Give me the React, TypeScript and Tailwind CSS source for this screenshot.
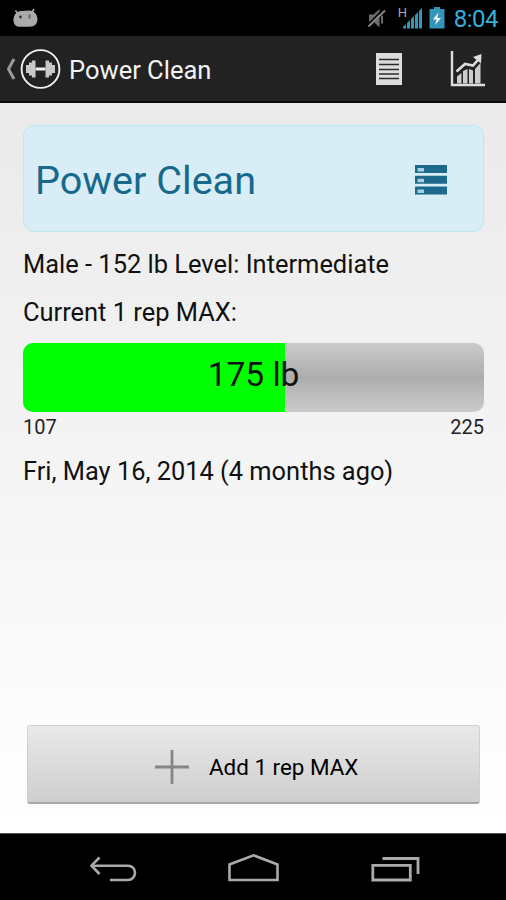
import type { ReactNode } from "react";

interface IconProps {
  width: number;
  height: number;
  className?: string;
  children: ReactNode;
}

const Icon = ({ width, height, className, children }: IconProps) => (
  <svg
    width={width}
    height={height}
    viewBox={`0 0 ${width} ${height}`}
    fill="none"
    className={`shrink-0 overflow-visible ${className ?? ""}`}
  >
    {children}
  </svg>
);

const StatusBar = () => {
  return (
    <header className="flex h-9 items-start bg-black pt-1.5">
      <Icon width={26} height={22} className="ml-3">
        <path d="M3.500 4.500 6 8M22 3l-2.500 4" stroke="#aaa" strokeWidth="1.600" />
        <path
          d="M1.500 15C1 10 4 5.500 9 5l8-.6c5-.2 8 3.600 8.400 8.100.3 4-1.600 7.500-5.400 7.900-4 .4-9 .6-13 .3-3.500-.3-5.200-2.300-5.500-5.700z"
          fill="#aaa"
        />
        <circle cx="8.500" cy="11" r="1.400" fill="#333" />
        <path d="M17.500 8.500v4" stroke="#555" strokeWidth="1.600" />
      </Icon>
      <div className="flex-1" />
      <Icon width={20} height={24}>
        <path d="M1 8.500h4.500l6-5.500v18.500l-6-6H1z" fill="#6c6c6c" />
        <path d="M14 9.500v8" stroke="#6c6c6c" strokeWidth="2" />
        <path d="M0 18.500 15.500 3" stroke="#000" strokeWidth="1.600" />
        <path d="M.5 20.500 17 4.500" stroke="#858585" strokeWidth="1.900" />
      </Icon>
      <div className="ml-[10px] flex h-6">
        <span className="w-[5px] font-[Roboto,sans-serif] text-[13px] leading-[14px] text-[#aaa]">
          H
        </span>
        <Icon width={20} height={24}>
          <path
            d="M0 22.500v-1.500l3-3v4.500zM4 22.500v-5.500l3-3v8.500zM8 22.500V13l3-3v12.500zM12 22.500V9l3-3v16.500zM16 22.500V5l3-3v20.500z"
            fill="#3299bb"
          />
        </Icon>
      </div>
      <Icon width={16} height={24} className="ml-[6px]">
        <path d="M5 1h6v2h4.500v19.500H.5V3H5z" fill="#3396b9" />
        <path d="M9.500 6.500 4 13.500h3.700L6 19l6-7H8.300z" fill="#fff" />
      </Icon>
      <span className="mr-2 ml-[9px] font-[Roboto,sans-serif] text-[24px] leading-[26px] tracking-[-0.500px] text-[#33b0dc]">
        8:04
      </span>
    </header>
  );
};

const ActionBar = () => {
  return (
    <div className="flex h-[67px] items-center border-b-2 border-[#080808] bg-[#222]">
      <Icon width={9} height={24} className="mt-px ml-1.5">
        <path d="M8 2 2.500 12 8 22" stroke="#999" strokeWidth="3" />
      </Icon>
      <Icon width={42} height={42} className="mt-px ml-[5px]">
        <circle cx="20.500" cy="21" r="18.900" stroke="#f2f2f2" strokeWidth="1.900" />
        <path
          d="M6 17h3v8H6zM9 14.500h3v13H9zM12 12.500h3.500v17H12zM25.500 12.500H29v17h-3.500zM29 14.500h3v13h-3zM32 17h3v8h-3z"
          fill="#c8c8c8"
        />
        <path d="M15.500 21h10" stroke="#eee" strokeWidth="3" />
      </Icon>
      <h1 className="mt-[3px] ml-[7px] font-[Roboto,sans-serif] text-[25.500px] leading-8 text-[#f3f3f3]">
        Power Clean
      </h1>
      <div className="flex-1" />
      <Icon width={26} height={32}>
        <path d="M0 0h26v32H0z" fill="#ddd" />
        <path
          d="M3 6.500h20M3 11.500h20M3 16.500h20M3 21h20M3 25.500h20"
          stroke="#2a2a2a"
          strokeWidth="1.700"
        />
      </Icon>
      <Icon width={36} height={38} className="mt-[3px] mr-[20px] ml-[48px]">
        <path d="M2 0v34h33" stroke="#ddd" strokeWidth="2.400" />
        <path
          d="M7 25.500l4.500-3.500v10.500H7zM13 20l4.500-2v14.500H13zM19 18l4 1.500v13h-4zM25 18l5.500-6v20.500H25z"
          fill="#ccc"
        />
        <path d="M6.500 20.500l8.500-7.500 8 1.500 7-8" stroke="#ddd" strokeWidth="2.600" />
        <path d="M23 6 31.500 3l-.5 9.500z" fill="#ddd" />
      </Icon>
    </div>
  );
};

interface RepMaxBarProps {
  value: string;
  min: number;
  max: number;
}

const RepMaxBar = ({ value, min, max }: RepMaxBarProps) => {
  return (
    <section>
      <div className="relative h-[69px] overflow-hidden rounded-[10px] bg-linear-to-b from-[#cbcbcb] via-[#adadad] to-[#cbcbcb]">
        <div className="h-full w-[262.400px] bg-[#00ff00]" />
        <span className="absolute inset-x-0 top-[12px] text-center text-[33.500px] leading-10">
          {value}
        </span>
      </div>
      <div className="flex justify-between text-[20px] leading-[30px] text-[#222]">
        <span>{min}</span>
        <span>{max}</span>
      </div>
    </section>
  );
};

const NavBar = () => {
  return (
    <nav className="flex h-[67px] items-center border-t border-[#555] bg-black pt-2">
      <Icon width={50} height={30} className="ml-[88px]">
        <path d="M11.500 1.500 3.500 9.700l8 8.300" stroke="#aaa" strokeWidth="2.600" />
        <path
          d="M4 9.700h36c4 0 7 3 7 7s-3 7.300-7 7.300H22"
          stroke="#aaa"
          strokeWidth="2.600"
        />
      </Icon>
      <Icon width={54} height={30} className="ml-[89px]">
        <path
          d="M2.500 24V8.500L26.500-.7l24 9.200V24z"
          stroke="#aaa"
          strokeWidth="2.600"
        />
      </Icon>
      <Icon width={50} height={30} className="ml-[90px]">
        <path d="M1.800 9.300h37.500V24H1.800z" stroke="#aaa" strokeWidth="2.800" />
        <path d="M11.500 2.500h35.500v15.500" stroke="#aaa" strokeWidth="2.800" />
      </Icon>
    </nav>
  );
};

const App = () => {
  return (
    <div className="flex h-[900px] w-[506px] flex-col overflow-hidden font-[Roboto,sans-serif] text-[#111]">
      <StatusBar />
      <ActionBar />

      <main className="flex flex-1 flex-col bg-linear-to-b from-[#eaeaea] to-white pt-[22px] pr-[22px] pl-[23px]">
        <section className="flex h-[107px] items-center justify-between rounded-[11px] border border-[#bce8f1] bg-[#d9edf7] pr-9 pl-[11px]">
          <h2 className="mt-1 text-[39.600px] leading-[48px] text-[#17698c]">Power Clean</h2>
          <Icon width={32} height={30} className="mt-[2px]">
            <path d="M0 0h32v8H0zM0 10.700h32v8H0zM0 21.500h32v8H0z" fill="#1d6a8c" />
            <path
              d="M2.500 3h6.500v3.500H2.500zM2.500 13.700h6.500v3.500H2.500zM2.500 24.500h6.500v3.500H2.500z"
              fill="#a9cfe0"
            />
          </Icon>
        </section>

        <p className="mt-4 text-[25.450px] leading-8">Male - 152 lb Level: Intermediate</p>
        <p className="mt-4 mb-[15px] text-[25.450px] leading-8">Current 1 rep MAX:</p>

        <RepMaxBar value="175 lb" min={107} max={225} />

        <p className="mt-[13px] text-[25.400px] leading-8">
          Fri, May 16, 2014 (4 months ago)
        </p>

        <button className="mx-1 mt-auto mb-[29px] flex h-[79px] items-center rounded-[3px] border border-[#d0d0d0] border-b-2 border-b-[#a8a8a8] bg-linear-to-b from-[#e9e9e9] to-[#cecece] pt-[5px] pl-[126.500px]">
          <Icon width={34} height={34}>
            <path d="M17 0v34M0 17h34" stroke="#858585" strokeWidth="2.800" />
          </Icon>
          <span className="mt-px ml-[20.500px] text-[22.400px] leading-7 text-black">
            Add 1 rep MAX
          </span>
        </button>
      </main>

      <NavBar />
    </div>
  );
};

export default App;
